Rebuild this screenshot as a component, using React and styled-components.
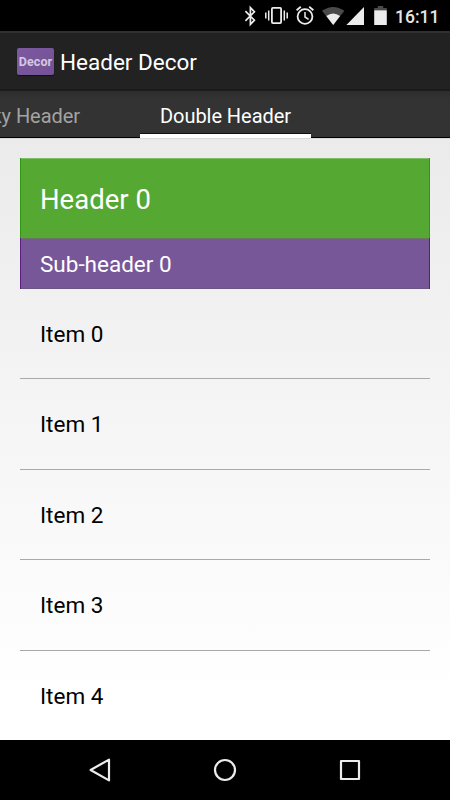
import React from 'react';
import styled, {createGlobalStyle} from 'styled-components';

const colors = {
  green: '#55a932',
  purple: '#775798',
  bar: '#222222',
  tabs: '#333333',
  icon: '#ececec',
};

const GlobalStyle = createGlobalStyle`
  * {
    box-sizing: border-box;
  }
  body {
    margin: 0;
    font-family: Roboto, 'Noto Sans', sans-serif;
    background: #000;
  }
`;

const Screen = styled.div`
  display: flex;
  flex-flow: column nowrap;
  width: 450px;
  height: 800px;
  overflow: hidden;
`;

const StatusBar = styled.header`
  display: flex;
  align-items: center;
  justify-content: flex-end;
  flex: 0 0 31px;
  padding-right: 10px;
  background: #000;
  svg {
    display: block;
    flex: none;
  }
`;

const Clock = styled.span`
  width: 45px;
  margin-left: 8px;
  padding-top: 2px;
  color: #e6e6e6;
  font-size: 17.5px;
  font-weight: 500;
  line-height: 20px;
  white-space: nowrap;
`;

const ActionBar = styled.div`
  display: flex;
  align-items: center;
  flex: 0 0 60px;
  padding: 1px 17px 0;
  border-top: 2px solid #303030;
  border-bottom: 2px solid #1b1b1b;
  background: ${colors.bar};
`;

const Logo = styled.div`
  display: flex;
  align-items: center;
  justify-content: center;
  width: 37px;
  height: 27px;
  border-radius: 2px;
  background: linear-gradient(135deg, #7d59a0, #735294);
  box-shadow: 0 1px 1px rgba(0, 0, 0, 0.5);
  color: #d5c8e2;
  font-size: 12.5px;
  font-weight: 700;
  letter-spacing: 0.1px;
`;

const Title = styled.h1`
  margin: 0 0 0 6px;
  color: #fff;
  font-size: 22.5px;
  font-weight: 400;
  line-height: 28px;
`;

const Tabs = styled.nav`
  display: flex;
  flex: 0 0 47px;
  background: linear-gradient(#2d2d2d, ${colors.tabs} 8px);
`;

const Tab = styled.div`
  display: flex;
  align-items: center;
  justify-content: ${props => (props.active ? 'center' : 'flex-end')};
  flex: 0 0 ${props => props.width}px;
  min-width: 0;
  padding: ${props => (props.active ? '7px 0 0' : '4px 60px 0 0')};
  border-bottom: ${props => (props.active ? '4px solid #fff' : '1px solid #000')};
  box-shadow: ${props => (props.active ? 'inset 0 -1px #111' : 'none')};
  color: ${props => (props.active ? '#fff' : '#a3a3a3')};
  font-size: 20px;
  line-height: 24px;
  letter-spacing: -0.05px;
  white-space: nowrap;
`;

const Content = styled.main`
  flex: 1 1 auto;
  min-height: 0;
  padding: 19px 20px 0;
  border-top: 1px solid #dadada;
  background: linear-gradient(#ebebeb, #fff 92%);
  overflow: hidden;
`;

const Header = styled.div`
  display: flex;
  align-items: center;
  height: ${props => (props.sub ? 51 : 80)}px;
  padding: ${props => (props.sub ? '1px' : '2px')} 0 0 19px;
  border: 0 solid ${props => (props.sub ? '#571f84' : '#2f9612')};
  border-width: 0 1px;
  background: ${props => (props.sub ? colors.purple : colors.green)};
  box-shadow: inset 0 1px ${props => (props.sub ? '#6c7563' : '#80bd67')},
    inset 0 -1px ${props => (props.sub ? '#6b5583' : colors.green)};
  color: #fff;
  font-size: ${props => (props.sub ? 22.5 : 27.5)}px;
  line-height: 1.2;
`;

const List = styled.ul`
  margin: -0.5px 0 0;
  padding: 0;
  list-style: none;
`;

const Item = styled.li`
  display: flex;
  align-items: center;
  height: 90.5px;
  padding: 2px 20px 0;
  border-bottom: 1px solid #a9a9a9;
  color: #000;
  font-size: 22.5px;
  line-height: 27px;
`;

const NavBar = styled.footer`
  display: flex;
  align-items: center;
  justify-content: space-between;
  flex: 0 0 60px;
  padding: 0 87px;
  background: #000;
`;

const NavIcon = styled.svg`
  display: block;
  width: 26px;
  height: 26px;
  fill: none;
  stroke: ${colors.icon};
  stroke-width: 2.2;
  stroke-linejoin: round;
`;

const StatusIcons = () => (
  <svg width='144' height='31' viewBox='243 0 144 31' fill='none' stroke={colors.icon}>
    {/* bluetooth */}
    <path d='M245.4 11.2l9 9-4 4.2V7.6l4 4.2-9 9' strokeWidth='1.7' />
    {/* vibrate */}
    <rect x='271.9' y='7.9' width='9.2' height='15.2' rx='1' strokeWidth='1.8' />
    <path d='M268.7 10.5v10M284.3 10.5v10M265.8 12.5v6M287.2 12.5v6' strokeWidth='1.5' />
    {/* alarm */}
    <circle cx='305' cy='16.5' r='7.4' strokeWidth='1.8' />
    <path d='M305 12v5l3.6 2.3' strokeWidth='1.5' />
    <path d='M296.6 10.2l4.2-3.4M313.4 10.2l-4.2-3.4' strokeWidth='1.8' />
    {/* wifi */}
    <path d='M322 10.8Q333.2 3 344.4 10.8L333.2 25z' fill='#4a4a4a' stroke='none' />
    <path d='M326.3 16Q333.2 11 340.1 16L333.2 25z' fill={colors.icon} stroke='none' />
    {/* signal */}
    <path d='M364 7v18h-17.6z' fill={colors.icon} stroke='none' />
    {/* battery */}
    <path d='M377.8 6h5.4v2h3.6v2.4h-12.6V8h3.6z' fill='#4a4a4a' stroke='none' />
    <path d='M374.2 10.3h12.6V25h-12.6z' fill={colors.icon} stroke='none' />
  </svg>
);

export default () => (
  <>
    <GlobalStyle />
    <Screen>
      <StatusBar>
        <StatusIcons />
        <Clock>16:11</Clock>
      </StatusBar>
      <ActionBar>
        <Logo>Decor</Logo>
        <Title>Header Decor</Title>
      </ActionBar>
      <Tabs>
        <Tab width={140}>Sticky Header</Tab>
        <Tab width={171} active>
          Double Header
        </Tab>
        <Tab width={139} />
      </Tabs>
      <Content>
        <Header>Header 0</Header>
        <Header sub>Sub-header 0</Header>
        <List>
          {[0, 1, 2, 3, 4].map(i => (
            <Item key={i}>Item {i}</Item>
          ))}
        </List>
      </Content>
      <NavBar>
        <NavIcon viewBox='0 0 26 26'>
          <path d='M3.6 13L22 2.6v20.8z' />
        </NavIcon>
        <NavIcon viewBox='0 0 26 26'>
          <circle cx='13' cy='13' r='10' />
        </NavIcon>
        <NavIcon viewBox='0 0 26 26'>
          <rect x='4' y='4' width='18' height='18' />
        </NavIcon>
      </NavBar>
    </Screen>
  </>
);
